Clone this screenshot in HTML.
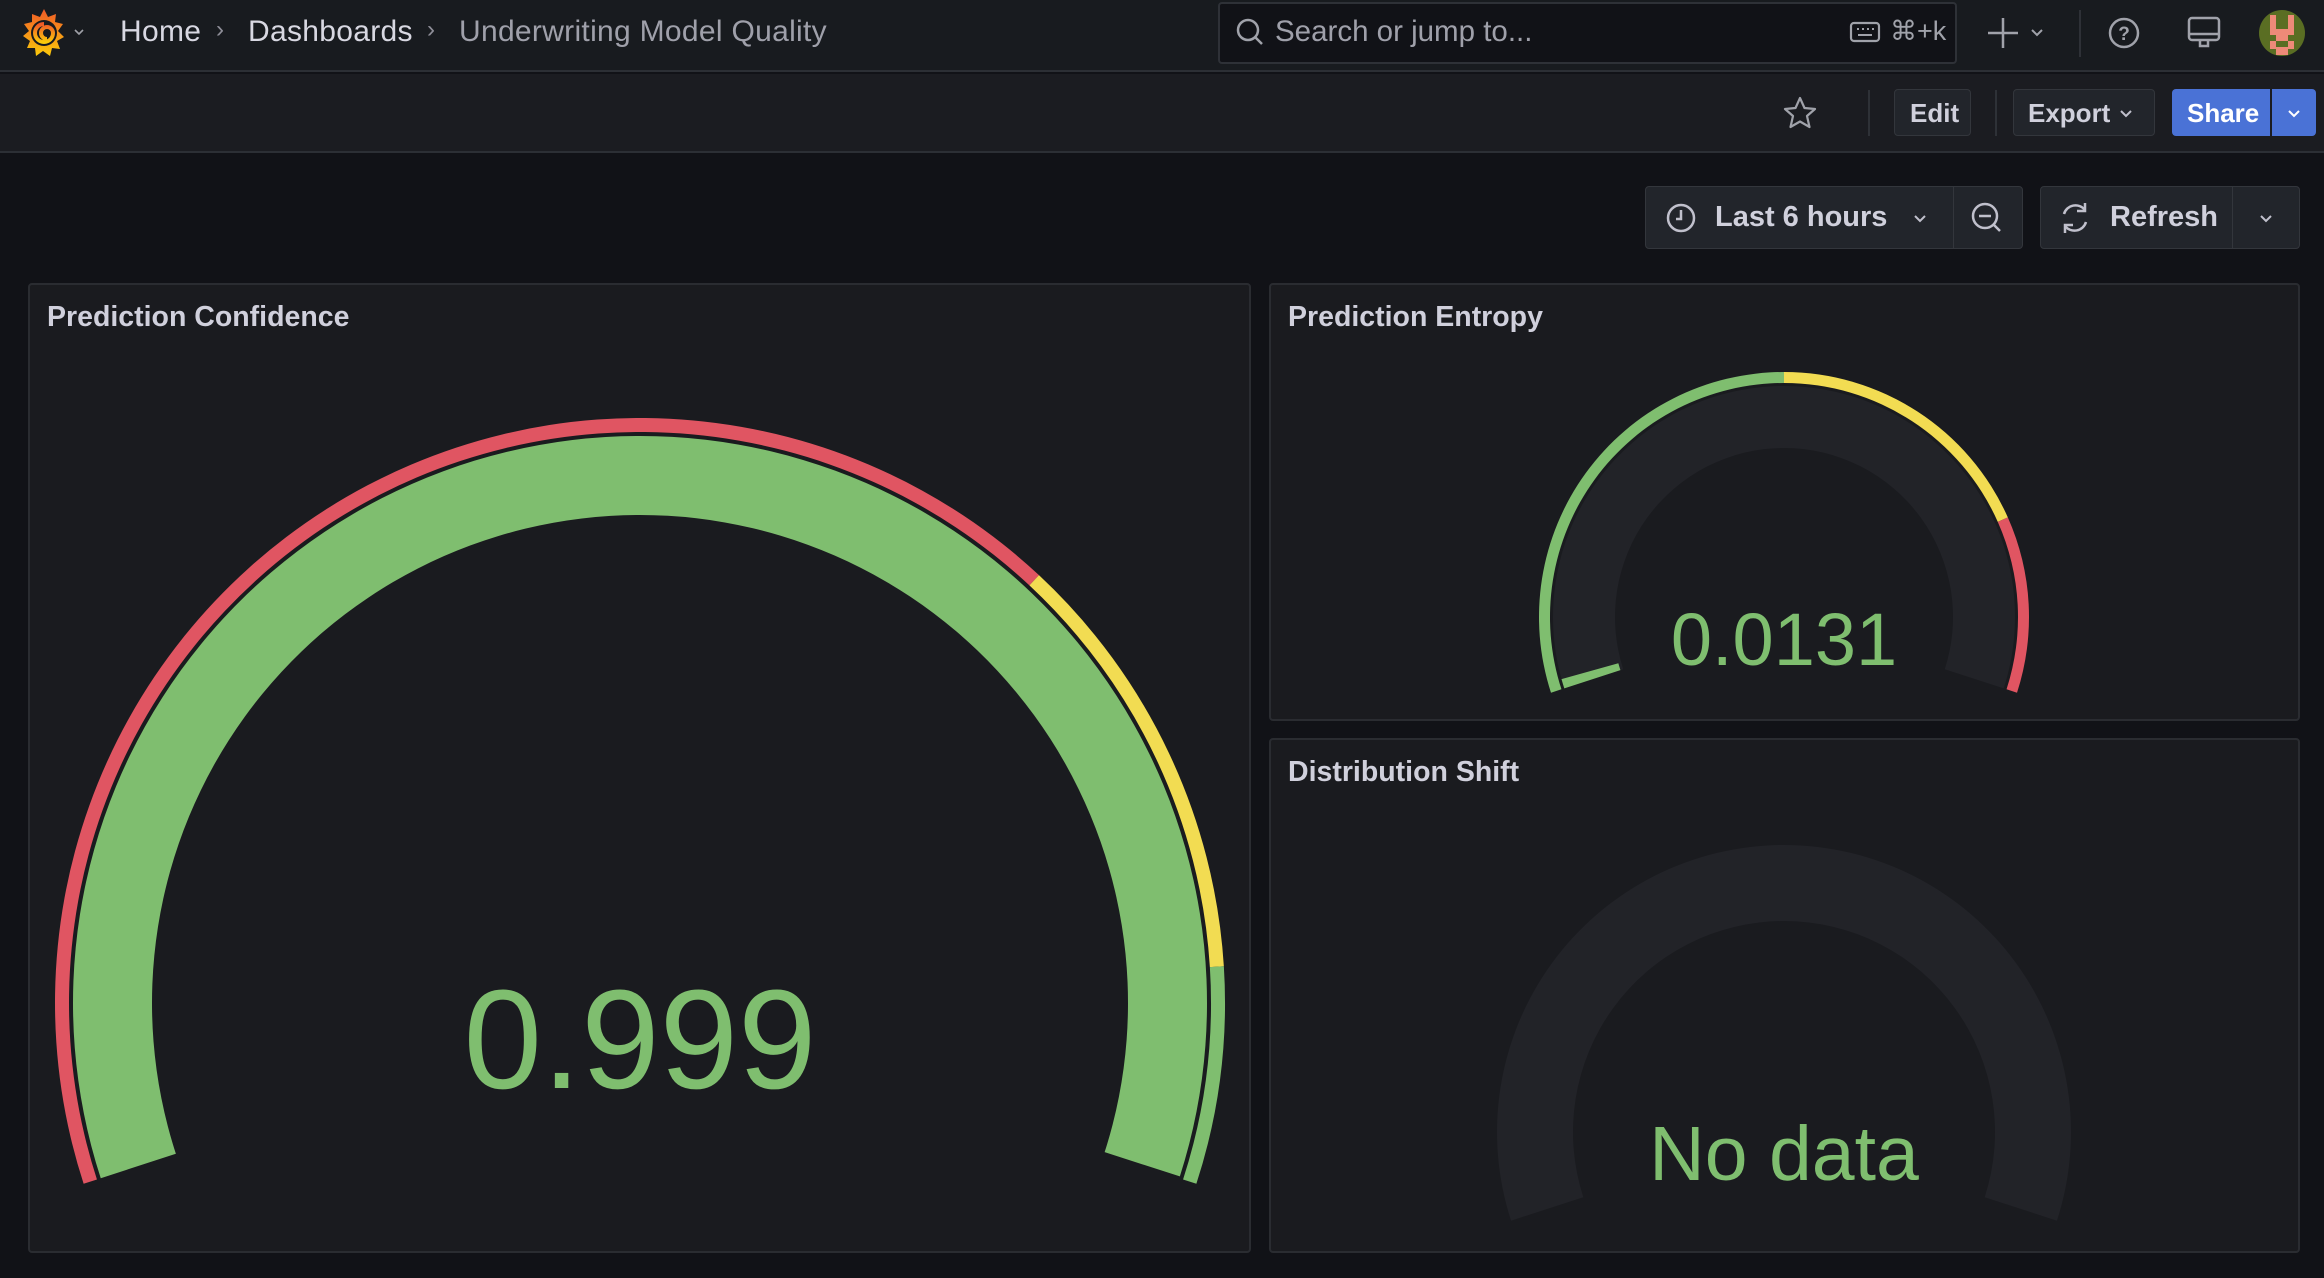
<!DOCTYPE html>
<html><head><meta charset="utf-8">
<style>
*{box-sizing:border-box;margin:0;padding:0}
body{width:2324px;height:1278px;background:#111217;font-family:"Liberation Sans",sans-serif;color:#ccccdc;position:relative;overflow:hidden}
.abs{position:absolute}
.top{left:0;top:0;width:2324px;height:72px;background:#181b1f;border-bottom:2px solid #2c2f35}
.bar2{left:0;top:74px;width:2324px;height:79px;background:#1b1c21;border-bottom:2px solid #2c2f35}
.t{position:absolute;white-space:nowrap}
.btn{position:absolute;background:#22252b;border:1px solid #33363c;border-radius:4px}
.panel{position:absolute;background:#1a1b1f;border:2px solid #2a2c31;border-radius:4px}
.title{position:absolute;left:17px;top:16px;font-size:28.5px;font-weight:bold;color:#d0d0dc}
svg{position:absolute;left:0;top:0}
.bc{font-size:30px;letter-spacing:0.3px}
</style></head><body>
<div class="abs top"></div>
<div class="abs bar2"></div>

<!-- logo -->
<svg width="80" height="72" viewBox="0 0 80 72" style="left:14px;top:0">
<defs><linearGradient id="lg" x1="0" y1="0" x2="0" y2="1"><stop offset="0" stop-color="#f05a28"/><stop offset="1" stop-color="#fbca0a"/></linearGradient></defs>
<path d="M30 9 L34 17 L42 14 L41 22 L49 24 L44 31 L50 37 L43 41 L46 49 L38 48 L36 56 L29 51 L22 56 L21 48 L13 48 L16 41 L9 36 L15 31 L10 24 L18 22 L18 14 L26 17 Z" fill="url(#lg)"/>
<circle cx="30" cy="33" r="13" fill="#181b1f"/>
<path d="M30 24 A9 9 0 1 0 39 33 A6 6 0 1 0 33 39" fill="none" stroke="url(#lg)" stroke-width="4"/>
<path d="M61 30 l4 4 l4 -4" fill="none" stroke="#9fa1a8" stroke-width="1.6"/>
</svg>
<div class="t bc" style="left:120px;top:15px;color:#d8d8e2">Home</div>
<div class="t" style="left:216px;top:16px;font-size:24px;color:#8e8e98">›</div>
<div class="t bc" style="left:248px;top:15px;color:#d8d8e2">Dashboards</div>
<div class="t" style="left:427px;top:16px;font-size:24px;color:#8e8e98">›</div>
<div class="t bc" style="left:459px;top:15px;color:#9fa0aa">Underwriting Model Quality</div>

<!-- search -->
<div class="abs" style="left:1218px;top:2px;width:739px;height:62px;background:#111217;border:2px solid #2e3137;border-radius:4px"></div>
<svg width="40" height="40" style="left:1232px;top:14px"><circle cx="16" cy="16" r="10" fill="none" stroke="#a0a2aa" stroke-width="2.5"/><path d="M23 23 L30 30" stroke="#a0a2aa" stroke-width="2.5"/></svg>
<div class="t" style="left:1275px;top:15px;font-size:29.5px;color:#9fa0aa">Search or jump to...</div>
<svg width="34" height="24" style="left:1849px;top:21px"><rect x="2" y="2" width="28" height="18" rx="3" fill="none" stroke="#a0a2aa" stroke-width="2.2"/><path d="M8 8h2M13 8h2M18 8h2M23 8h2M9 14h14" stroke="#a0a2aa" stroke-width="2"/></svg>
<div class="t" style="left:1890px;top:16px;font-size:27px;color:#a0a2aa">⌘+k</div>
<svg width="80" height="40" style="left:1983px;top:13px"><path d="M20 5v30M5 20h30" stroke="#a0a2aa" stroke-width="2.5"/><path d="M49 17l5 5l5-5" fill="none" stroke="#a0a2aa" stroke-width="2"/></svg>
<div class="abs" style="left:2079px;top:10px;width:2px;height:47px;background:#2e3137"></div>
<svg width="40" height="40" style="left:2104px;top:13px"><circle cx="20" cy="20" r="14" fill="none" stroke="#a0a2aa" stroke-width="2.5"/><text x="20" y="27" font-size="19" font-weight="bold" fill="#a0a2aa" text-anchor="middle" font-family="Liberation Sans">?</text></svg>
<svg width="40" height="40" style="left:2184px;top:13px"><rect x="5" y="5" width="30" height="22" rx="3" fill="none" stroke="#a0a2aa" stroke-width="2.5"/><path d="M5 21h30M16 27v6h8v-6" fill="none" stroke="#a0a2aa" stroke-width="2.5"/></svg>
<svg width="48" height="48" style="left:2258px;top:9px"><clipPath id="av"><circle cx="24" cy="24" r="23"/></clipPath><g clip-path="url(#av)"><rect width="48" height="48" fill="#5a6e23"/><path d="M12 6h6v14h12V6h6v20H30v6h6v8h-6v6h-12v-6h-6v-8h6v-6H12z" fill="#ee8a78"/><rect x="18" y="32" width="12" height="6" fill="#5a6e23"/></g></svg>

<!-- bar2 -->
<svg width="40" height="40" style="left:1780px;top:93px"><path d="M20 5 L24.5 15 L35 16 L27 23 L29.5 34 L20 28.5 L10.5 34 L13 23 L5 16 L15.5 15 Z" fill="none" stroke="#a0a2aa" stroke-width="2.2" stroke-linejoin="round"/></svg>
<div class="abs" style="left:1868px;top:90px;width:2px;height:46px;background:#2e3137"></div>
<div class="btn" style="left:1894px;top:89px;width:77px;height:47px"></div>
<div class="t" style="left:1910px;top:98px;font-size:26px;font-weight:bold;color:#d0d0dc">Edit</div>
<div class="abs" style="left:1995px;top:90px;width:2px;height:46px;background:#2e3137"></div>
<div class="btn" style="left:2013px;top:89px;width:142px;height:47px"></div>
<div class="t" style="left:2028px;top:98px;font-size:26px;font-weight:bold;color:#d0d0dc">Export</div>
<svg width="20" height="20" style="left:2116px;top:103px"><path d="M5 8l5 5l5-5" fill="none" stroke="#c0c0cc" stroke-width="2"/></svg>
<div class="abs" style="left:2172px;top:89px;width:98px;height:47px;background:#4a72d6;border-radius:4px 0 0 4px"></div>
<div class="abs" style="left:2272px;top:89px;width:44px;height:47px;background:#4a72d6;border-radius:0 4px 4px 0"></div>
<div class="t" style="left:2187px;top:98px;font-size:26px;font-weight:bold;color:#ffffff">Share</div>
<svg width="20" height="20" style="left:2284px;top:103px"><path d="M5 8l5 5l5-5" fill="none" stroke="#fff" stroke-width="2"/></svg>

<!-- time picker -->
<div class="btn" style="left:1645px;top:186px;width:378px;height:63px"></div>
<div class="abs" style="left:1953px;top:187px;width:1px;height:61px;background:#33363c"></div>
<svg width="40" height="40" style="left:1661px;top:198px"><circle cx="20" cy="20" r="13" fill="none" stroke="#c0c0cc" stroke-width="2.5"/><path d="M20 12v9h-5" fill="none" stroke="#c0c0cc" stroke-width="2.5"/></svg>
<div class="t" style="left:1715px;top:201px;font-size:29px;font-weight:bold;color:#d0d0dc">Last 6 hours</div>
<svg width="20" height="20" style="left:1910px;top:208px"><path d="M5 8l5 5l5-5" fill="none" stroke="#c0c0cc" stroke-width="2"/></svg>
<svg width="40" height="40" style="left:1967px;top:198px"><circle cx="18" cy="18" r="12" fill="none" stroke="#c0c0cc" stroke-width="2.5"/><path d="M12 18h12M27 27l6 6" stroke="#c0c0cc" stroke-width="2.5"/></svg>
<div class="btn" style="left:2040px;top:186px;width:260px;height:63px"></div>
<div class="abs" style="left:2232px;top:187px;width:1px;height:61px;background:#33363c"></div>
<svg width="40" height="40" style="left:2055px;top:198px"><path d="M9 16 A12 12 0 0 1 30 12 M31 24 A12 12 0 0 1 10 28" fill="none" stroke="#c0c0cc" stroke-width="2.5"/><path d="M30 5v8h-8M10 35v-8h8" fill="none" stroke="#c0c0cc" stroke-width="2.5"/></svg>
<div class="t" style="left:2110px;top:201px;font-size:29px;font-weight:bold;color:#d0d0dc">Refresh</div>
<svg width="20" height="20" style="left:2256px;top:208px"><path d="M5 8l5 5l5-5" fill="none" stroke="#c0c0cc" stroke-width="2"/></svg>

<!-- panels -->
<div class="panel" style="left:28px;top:283px;width:1223px;height:970px"><div class="title">Prediction Confidence</div></div>
<div class="panel" style="left:1269px;top:283px;width:1031px;height:438px"><div class="title">Prediction Entropy</div></div>
<div class="panel" style="left:1269px;top:738px;width:1031px;height:515px"><div class="title">Distribution Shift</div></div>

<svg id="g" width="2324" height="1278" viewBox="0 0 2324 1278"></svg>

<div class="t" style="left:440px;top:958px;width:400px;text-align:center;font-size:141px;color:#7fbe6f">0.999</div>
<div class="t" style="left:1584px;top:597px;width:400px;text-align:center;font-size:74px;color:#7fbe6f">0.0131</div>
<div class="t" style="left:1584px;top:1110px;width:400px;text-align:center;font-size:77px;color:#7fbe6f">No data</div>

<script>
function P(cx,cy,r1,r2,a1,a2){
 var R=Math.PI/180;function pt(r,a){return (cx+r*Math.cos(a*R)).toFixed(2)+' '+(cy-r*Math.sin(a*R)).toFixed(2)}
 var large=Math.abs(a1-a2)>180?1:0;
 return 'M'+pt(r2,a1)+' A'+r2+' '+r2+' 0 '+large+' 1 '+pt(r2,a2)+' L'+pt(r1,a2)+' A'+r1+' '+r1+' 0 '+large+' 0 '+pt(r1,a1)+' Z';
}
var G='#7fbe6f',Y='#f2dc52',Rd='#e05562',B='#222328';
var arcs=[
 [640,1003,571,585,198,47,Rd],[640,1003,571,585,47,3.6,Y],[640,1003,571,585,3.6,-18,G],
 [640,1003,488,567,198,-17.8,G],
 [1784,617,234,245,198,90,G],[1784,617,234,245,90,24,Y],[1784,617,234,245,24,-18,Rd],
 [1784,617,169,231,198,-18,B],[1784,617,172,231,198,195.6,G],
 [1784,1132,211,287,198,-18,B]
];
var s='';arcs.forEach(function(a){s+='<path d="'+P(a[0],a[1],a[2],a[3],a[4],a[5])+'" fill="'+a[6]+'"/>'});
document.getElementById('g').innerHTML=s;
</script>
</body></html>
